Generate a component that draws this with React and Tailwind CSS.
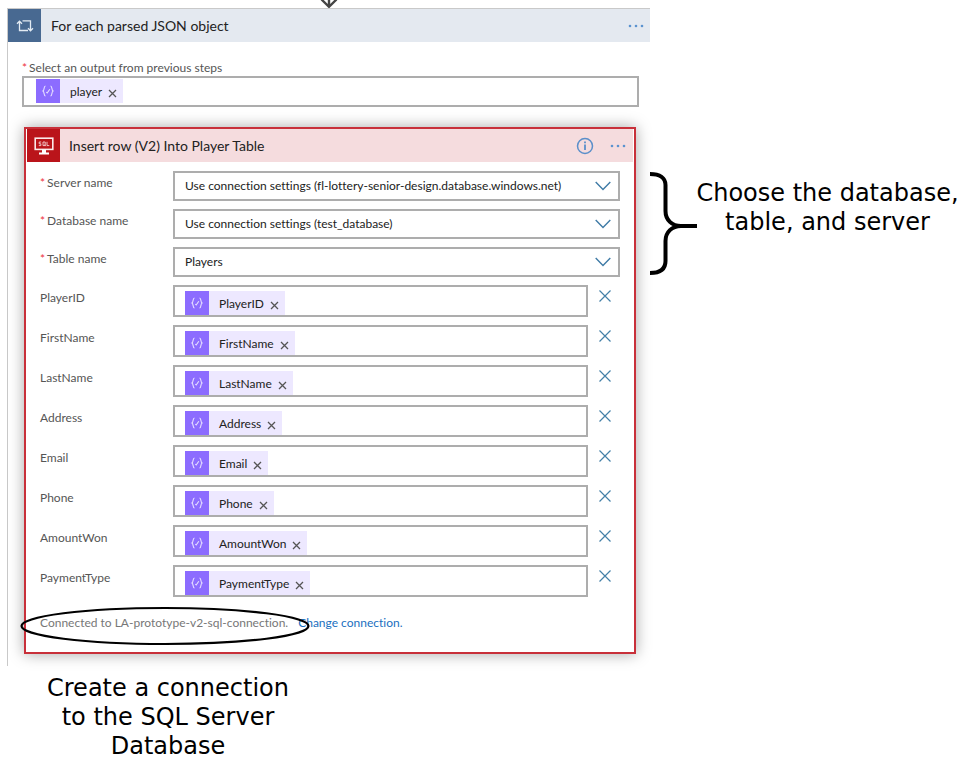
import React from "react";

const connectionRows = [
  { id: "server", label: "Server name", value: "Use connection settings (fl-lottery-senior-design.database.windows.net)" },
  { id: "database", label: "Database name", value: "Use connection settings (test_database)" },
  { id: "table", label: "Table name", value: "Players" },
];

const columns = ["PlayerID", "FirstName", "LastName", "Address", "Email", "Phone", "AmountWon", "PaymentType"];

function Dots() {
  return (
    <svg viewBox="0 0 16 4" className="h-1 w-4 fill-[#5b93cf]" aria-hidden="true">
      <circle cx="2" cy="2" r="1.3" />
      <circle cx="8" cy="2" r="1.3" />
      <circle cx="14" cy="2" r="1.3" />
    </svg>
  );
}

function LoopIcon() {
  return (
    <svg viewBox="0 0 18 14" className="h-[14px] w-[18px]" fill="none" stroke="#e3ebf3" strokeWidth="1.3" aria-hidden="true">
      <path d="M3.5 2.5V11.5H12M1 4.8L3.5 2.2L6 4.8" />
      <path d="M6.5 1.8H14.5V11.5M12 9.2L14.5 11.8L17 9.2" />
    </svg>
  );
}

function SqlIcon() {
  return (
    <svg viewBox="0 0 20 18" className="h-[18px] w-5" aria-hidden="true">
      <rect x="1.2" y="1.2" width="17.6" height="11.2" fill="none" stroke="#fbe9ea" strokeWidth="1.6" />
      <path d="M8 12.5h4v3h3v2H5v-2h3z" fill="#fff" />
      <path d="M7.2 5H5.2v1.8h1.7v1.8H4.8M9 5h2.2v3.6H9zM10.4 7.6l1.4 1.6M13 4.8v3.8h2.3" fill="none" stroke="#f6d3d5" strokeWidth="0.9" />
    </svg>
  );
}

function Chip({ name }) {
  return (
    <span className="flex h-6 shrink-0 items-center bg-[#ede8ff] pr-[6px]">
      <span className="flex size-6 items-center justify-center bg-[#8c6cff]">
        <svg viewBox="0 0 14 12" className="h-3 w-[14px]" fill="none" stroke="#e6dfff" strokeWidth="1.1" aria-hidden="true">
          <path d="M4.500 1C2.600 1 3.600 5.200 2 6C3.600 6.800 2.600 11 4.500 11M9.500 1C11.400 1 10.400 5.200 12 6C10.400 6.800 11.400 11 9.500 11" />
          <path d="M5.300 7.200L6.200 8L8.800 4.300" />
        </svg>
      </span>
      <span className="pl-[10px] pt-[2px] text-[12px] leading-4 text-[#222]">{name}</span>
      <button type="button" aria-label={"Remove " + name} className="ml-[6px] mt-1 flex size-[9px] items-center justify-center">
        <svg viewBox="0 0 9 9" className="size-[9px]" stroke="#555" strokeWidth="1.3" aria-hidden="true">
          <path d="M1 1L8 8M8 1L1 8" />
        </svg>
      </button>
    </span>
  );
}

function Star() {
  return <span className="mr-[2px] text-[#ee3340]">*</span>;
}

function SelectRow({ id, label, value }) {
  return (
    <div className="flex h-[30px]">
      <label htmlFor={id} className="w-[133px] shrink-0 pt-1 text-[12px] leading-4 text-[#555]">
        <Star />
        {label}
      </label>
      <div className="grid min-w-0 flex-1 items-center">
        <select id={id} className="col-start-1 row-start-1 h-[30px] w-full appearance-none border-2 border-[#adadad] bg-white pl-[10px] pr-8 text-[12px] text-[#222]">
          <option>{value}</option>
        </select>
        <svg viewBox="0 0 16 10" className="pointer-events-none col-start-1 row-start-1 mr-[9px] h-[10px] w-4 justify-self-end" fill="none" stroke="#3f7ba6" strokeWidth="1.4" aria-hidden="true">
          <path d="M0.700 1L8 8.500L15.300 1" />
        </svg>
      </div>
    </div>
  );
}

function TokenRow({ name }) {
  return (
    <div className="flex h-8">
      <label htmlFor={name} className="w-[133px] shrink-0 pt-[5px] text-[12px] leading-4 text-[#555]">
        {name}
      </label>
      <div className="flex min-w-0 flex-1 items-end border-2 border-[#adadad] pl-[10px]">
        <Chip name={name} />
        <input id={name} type="text" className="h-6 min-w-0 flex-1 text-[12px] outline-none" />
      </div>
      <button type="button" aria-label={"Delete " + name} className="ml-[11px] mt-[5px] flex h-3 w-[21px] items-center">
        <svg viewBox="0 0 12 12" className="size-3" stroke="#4480a8" strokeWidth="1.2" aria-hidden="true">
          <path d="M0.500 0.500L11.500 11.500M11.500 0.500L0.500 11.500" />
        </svg>
      </button>
    </div>
  );
}

function InsertRowCard() {
  return (
    <section className="ml-4 mr-[14px] mt-5 border-2 border-[#c8303a] bg-white shadow-[0_0_14px_rgba(0,0,0,0.35)]">
      <header className="mx-px flex h-[33px] items-center bg-[#f5dcde] pr-[7px]">
        <span className="flex size-[33px] items-center justify-center bg-[#ba141a]">
          <SqlIcon />
        </span>
        <h2 className="flex-1 pl-[9px] text-[14px] text-[#222]">Insert row (V2) Into Player Table</h2>
        <button type="button" aria-label="Information" className="mr-4">
          <svg viewBox="0 0 18 18" className="size-[18px]" fill="none" stroke="#5b8fca" strokeWidth="1.5" aria-hidden="true">
            <circle cx="9" cy="9" r="7.500" />
            <path d="M9 7.500V13M9 4.500V6.300" strokeWidth="1.800" />
          </svg>
        </button>
        <button type="button" aria-label="Card options">
          <Dots />
        </button>
      </header>
      <div className="flex flex-col gap-2 px-[14px] pt-[9px]">
        {connectionRows.map((row) => (
          <SelectRow key={row.id} {...row} />
        ))}
        {columns.map((name) => (
          <TokenRow key={name} name={name} />
        ))}
      </div>
      <footer className="relative flex h-[55px] items-start gap-[10px] pl-[14px] pt-[18px] text-[12px] leading-4">
        <span className="text-[#777]">Connected to LA-prototype-v2-sql-connection.</span>
        <a href="#change" className="text-[#1a6fc0]">Change connection.</a>
        <svg viewBox="0 0 290 40" className="pointer-events-none absolute -left-[6px] top-[9px] h-10 w-[290px]" fill="none" stroke="#000" strokeWidth="2.200" aria-hidden="true">
          <ellipse cx="145" cy="20" rx="143.500" ry="18" />
        </svg>
      </footer>
    </section>
  );
}

export default function App() {
  return (
    <main className="flex min-h-screen bg-white font-[Lato,sans-serif] [font-variant-ligatures:none]">
      <div className="min-w-0 flex-1 pl-[7px]">
        <svg viewBox="0 0 18 8" className="mx-auto h-2 w-[18px]" fill="none" stroke="#444" strokeWidth="2.400" aria-hidden="true">
          <path d="M9 0V7M1.500 -0.500L9 6.800L16.500 -0.500" />
        </svg>
        <section className="border-l border-t border-[#c9c9c9] pb-3">
          <header className="flex h-[33px] items-center bg-[#e4e9f0] pr-[6px]">
            <span className="flex size-[33px] items-center justify-center bg-[#486991]">
              <LoopIcon />
            </span>
            <h1 className="flex-1 pl-[10px] text-[14px] text-[#222]">For each parsed JSON object</h1>
            <button type="button" aria-label="Loop options">
              <Dots />
            </button>
          </header>
          <div className="ml-[14px] mr-[11px] pt-[18px]">
            <label htmlFor="output" className="block text-[12px] leading-4 text-[#555]">
              <Star />
              Select an output from previous steps
            </label>
            <div className="flex h-[31px] items-start border-2 border-[#adadad] pl-3 pt-px">
              <Chip name="player" />
              <input id="output" type="text" className="h-6 min-w-0 flex-1 text-[12px] outline-none" />
            </div>
          </div>
          <InsertRowCard />
        </section>
        <p className="w-[322px] pt-2 text-center font-['DejaVu_Sans',sans-serif] text-[24px] leading-[29px]">
          Create a connection
          <br />
          to the SQL Server
          <br />
          Database
        </p>
      </div>
      <aside className="flex w-[327px] shrink-0 items-start pr-5 pt-[171px]">
        <svg viewBox="0 0 48 104" className="h-[104px] w-12 shrink-0" fill="none" stroke="#000" strokeWidth="4" aria-hidden="true">
          <path d="M0 3C10 3 15.500 7 15.500 14V40C15.500 49 22 55 31 55H47M0 102C10 102 15.500 98 15.500 90V70C15.500 61 22 55 31 55" />
        </svg>
        <p className="-mx-2 flex-1 whitespace-nowrap pt-2 text-center font-['DejaVu_Sans',sans-serif] text-[24px] leading-[29px]">
          Choose the database,
          <br />
          table, and server
        </p>
      </aside>
    </main>
  );
}
